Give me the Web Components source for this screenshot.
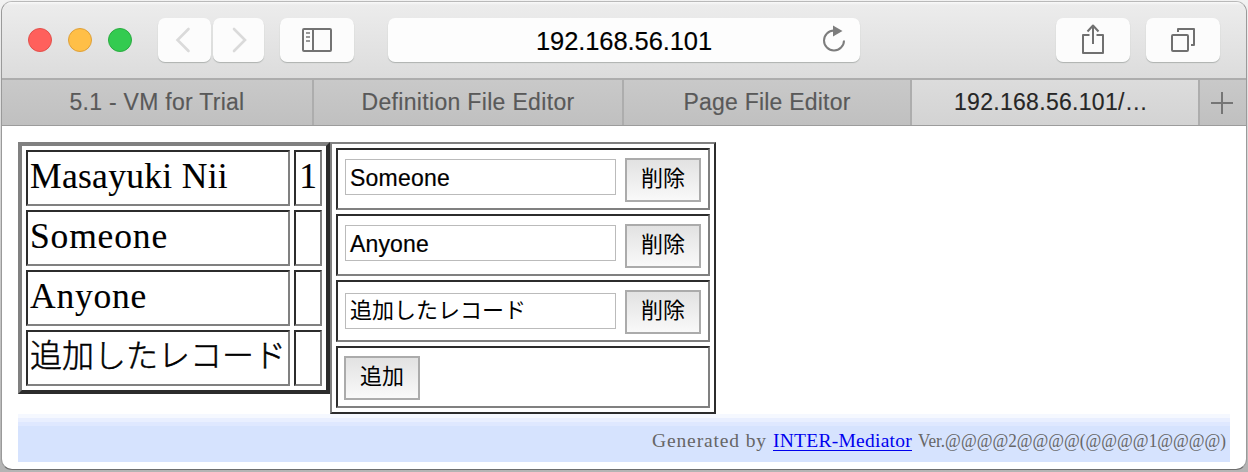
<!DOCTYPE html>
<html lang="ja">
<head>
<meta charset="utf-8">
<title>192.168.56.101</title>
<style>
html,body{margin:0;height:100%;overflow:hidden}
body{background:linear-gradient(#f2f2f2 0,#d8d8d8 30%,#b4b4b4 100%);font-family:"Liberation Sans","Noto Sans CJK JP",sans-serif}
</style>
</head>
<body>
<browser-window>
  <tool-bar slot="bar"></tool-bar>
  <tab-strip slot="bar">
    <browser-tab style="--w:310px" fit="175">5.1 - VM for Trial</browser-tab>
    <browser-tab style="--w:308px" fit="213">Definition File Editor</browser-tab>
    <browser-tab style="--w:286px" fit="167">Page File Editor</browser-tab>
    <browser-tab style="--w:286px;--nudge:8px" fit="194" active>192.168.56.101/…</browser-tab>
  </tab-strip>
  <name-table></name-table>
  <edit-table></edit-table>
  <credit-bar slot="foot"></credit-bar>
</browser-window>
<script>
const define = (name, html, setup) => customElements.define(name, class extends HTMLElement {
  connectedCallback() {
    if (this.shadowRoot) return;
    this.attachShadow({mode: 'open'}).innerHTML = typeof html === 'function' ? html(this) : html;
    if (setup) setup(this);
  }
});

// A single line of text that spans the width given in "w", by tracking or, with "squeeze", by scaling.
define('fit-text', '<style>:host{display:inline-block;white-space:pre}span{display:inline-block;transform-origin:0 50%}</style><span></span>', el => {
  const s = el.shadowRoot.querySelector('span');
  s.textContent = el.getAttribute('text');
  const w = parseFloat(el.getAttribute('w')), n = s.textContent.length;
  const natural = s.getBoundingClientRect().width;
  if (el.hasAttribute('squeeze')) {
    s.style.transform = `scaleX(${w / natural})`;
    el.style.width = w + 'px';
  } else {
    s.style.letterSpacing = ((w - natural) / n).toFixed(3) + 'px';
  }
});

define('browser-window', `<style>
:host{display:flex;flex-direction:column;box-sizing:border-box;height:469px;margin:1px 1px 0 1px;border:1px solid #9a9a9a;border-top-color:#b9b9b9;border-bottom-color:#6e6e6e;border-radius:11px;background:#fff;overflow:hidden}
.page{display:flex;align-items:flex-start;padding:16px 16px 0;height:272px}
.foot{padding:0 16px}
</style><slot name="bar"></slot><div class="page"><slot></slot></div><div class="foot"><slot name="foot"></slot></div>`);

define('tool-button', `<style>
:host{display:flex;align-items:center;justify-content:center;width:var(--w,74px);height:44px;border-radius:7px;background:#fcfcfc;box-shadow:0 1px 1px #aeb2b0}
::slotted(svg){display:block}
</style><slot></slot>`);

define('tool-bar', `<style>
:host{display:flex;height:76px;box-sizing:border-box;padding:16px 26px 0;background:linear-gradient(#fafafa 0,#ececec 3px,#dcdcdc 100%)}
.lights{display:flex;gap:16px;padding-top:10px;width:130px}
i{width:24px;height:24px;border-radius:50%;box-sizing:border-box;border:1px solid}
.r{background:#ff605c;border-color:#e2504b}.y{background:#ffbf47;border-color:#dea03a}.g{background:#33cb50;border-color:#2aab40}
.url{display:flex;align-items:center;width:472px;height:44px;box-sizing:border-box;margin:0 196px 0 34px;padding:2px 13px 0 148px;justify-content:space-between;border-radius:7px;background:#fdfdfd;box-shadow:0 1px 1px #aeb2b0;font-size:25.5px;-webkit-text-stroke:.15px #000}
</style>
<div class="lights"><i class="r"></i><i class="y"></i><i class="g"></i></div>
<tool-button style="--w:53px"><svg width="53" height="44"><path d="M30.500 11 19.500 22l11 11" fill="none" stroke="#dadada" stroke-width="2.6" stroke-linecap="round"/></svg></tool-button>
<tool-button style="--w:51px;margin-left:2px"><svg width="51" height="44"><path d="M21 11 32 22 21 33" fill="none" stroke="#dadada" stroke-width="2.6" stroke-linecap="round"/></svg></tool-button>
<tool-button style="margin-left:16px"><svg width="74" height="44"><g fill="none" stroke="#737373" stroke-width="2"><rect x="23" y="11" width="28" height="22" rx="1"/><path d="M33 11v22"/><path d="M26 15h4m-4 4h4m-4 4h4" stroke="#999"/></g></svg></tool-button>
<div class="url"><fit-text text="192.168.56.101" w="176"></fit-text><svg width="26" height="30" style="margin-top:-4px"><path d="M13 6.500A10 10 0 1 0 23 16.500" fill="none" stroke="#7d7d7d" stroke-width="2"/><path d="M12 1.500 21.500 7 12 12.500z" fill="#7d7d7d"/></svg></div>
<tool-button><svg width="74" height="44"><path d="M33.500 17H27v18h20V17h-6.500M37 26V7.500M31.500 13.500l5.500-6 5.500 6" fill="none" stroke="#707070" stroke-width="2" stroke-linejoin="round"/></svg></tool-button>
<tool-button style="margin-left:16px"><svg width="74" height="44"><g fill="none" stroke="#707070" stroke-width="2"><rect x="26" y="17" width="16" height="16" rx="1"/><path d="M32 14v-3h16v16h-3" stroke-linejoin="round"/></g></svg></tool-button>`);

define('tab-strip', `<style>
:host{display:flex;height:48px;box-sizing:border-box;border-top:2px solid #adadad;border-bottom:1px solid #9c9c9c;background:linear-gradient(#c9c9c9,#c0c0c0)}
.plus{flex:1;display:flex;align-items:center;justify-content:center}
</style><slot></slot><div class="plus"><svg width="22" height="22" style="margin:0 2px 0 0"><path d="M0 11h22M11 0v22" stroke="#757575" stroke-width="2"/></svg></div>`);

define('browser-tab', el => `<style>
:host{display:flex;align-items:center;justify-content:center;width:calc(var(--w) - var(--nudge,0px));border-right:2px solid #adadad;color:#595959;-webkit-text-stroke:.15px #595959;font-size:23px;padding:0 var(--nudge,0px) 1px 0;box-sizing:content-box;flex:none}
:host([active]){background:linear-gradient(#dcdcdc,#d3d3d3);color:#262626;-webkit-text-stroke-color:#262626}
</style><fit-text text="${el.textContent}" w="${el.getAttribute('fit')}"></fit-text>`);

define('name-table', () => {
  const rows = [['Masayuki Nii', 198, '1'], ['Someone', 138, ''], ['Anyone', 117, ''], ['追加したレコード', 256, '']];
  return `<style>
:host{display:grid;grid-template-columns:264px 28px;grid-auto-rows:56px;gap:4px;padding:4px;border:4px solid;border-color:#808080 #2c2c2c #2c2c2c #808080;font:35.5px "Liberation Serif","Noto Sans CJK JP",serif;-webkit-text-stroke:.12px #000}
div{box-sizing:border-box;border:2px solid;border-color:#2c2c2c #808080 #808080 #2c2c2c;padding:2px;line-height:44px;overflow:hidden;white-space:nowrap}
.n{text-align:center;padding:2px 0}
.jp{font-size:32px;font-weight:300;-webkit-text-stroke:.5px #000;line-height:45px}
</style>` + rows.map(([t, w, n], i) => `<div class="${i == 3 ? 'jp' : ''}"><fit-text text="${t}" w="${w}"></fit-text></div><div class="n">${n}</div>`).join('');
});

define('push-button', `<style>
:host{display:block;box-sizing:border-box;width:76px;height:44px;border:2px solid #ababab;background:linear-gradient(#e2e2e2,#f9f9f9);font:22px/32px "Noto Sans CJK JP",sans-serif;text-align:center;color:#000}
</style><slot></slot>`);

define('edit-table', () => {
  const rows = [['Someone', 100], ['Anyone', 79], ['追加したレコード', 176]];
  return `<style>
:host{display:grid;grid-template-columns:374px;grid-auto-rows:62px;gap:4px;padding:4px;border:2px solid;border-color:#808080 #2c2c2c #2c2c2c #808080}
.c{display:flex;align-items:flex-start;box-sizing:border-box;border:2px solid;border-color:#2c2c2c #808080 #808080 #2c2c2c;padding:8px 7px 0 7px;justify-content:space-between}
.c.last{padding-left:6px}
.in{box-sizing:border-box;width:271px;height:36px;margin-top:1px;border:1px solid #bbb;padding-left:4px;font-size:23px;line-height:36px;-webkit-text-stroke:.2px #000}
.in.jp{margin-top:3px;font-size:22px;line-height:28px;font-family:"Noto Sans CJK JP",sans-serif;-webkit-text-stroke:0}
</style>` + rows.map(([t, w], i) => `<div class="c"><div class="in ${i == 2 ? 'jp' : ''}"><fit-text text="${t}" w="${w}"></fit-text></div><push-button>削除</push-button></div>`).join('') + `<div class="c last"><push-button>追加</push-button></div>`;
});

define('credit-bar', `<style>
:host{display:block;height:48px;box-sizing:border-box;padding:14px 4px 0 0;color:#666;font:19.5px/26px "Liberation Serif",serif;background:linear-gradient(#f5f8ff 0 4px,#e9efff 4px 8px,#dfe8ff 8px 12px,#d6e3fe 12px)}
a{color:#00e}
a fit-text{border-bottom:1px solid #00e;line-height:26px;height:22px}
div{display:flex;justify-content:flex-end;gap:6px}
</style><div><fit-text text="Generated by" w="115"></fit-text><a><fit-text text="INTER-Mediator" w="139"></fit-text></a><fit-text squeeze text="Ver.@@@@2@@@@(@@@@1@@@@)" w="308"></fit-text></div>`);
</script>
</body>
</html>
